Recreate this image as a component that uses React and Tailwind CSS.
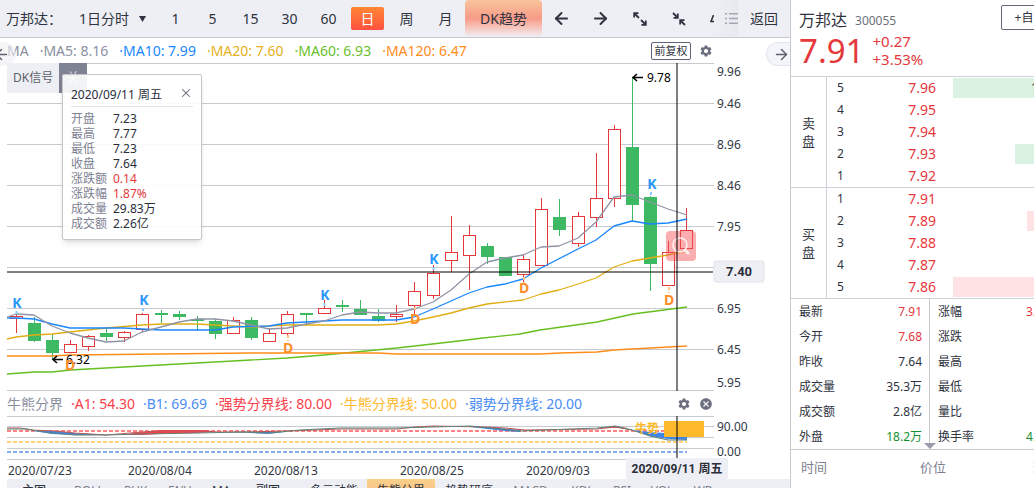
import { useState } from 'react';
import { ArrowLeft, ArrowRight, X } from 'lucide-react';
import { MdSettings, MdCancel } from 'react-icons/md';

const RED = '#e5383b';
const GREEN = '#3cb962';

const PERIODS = ['1', '5', '15', '30', '60', '日', '周', '月'];

const AVERAGES = [
  { name: 'MA5', value: '8.16', color: 'text-[#8b90a0]' },
  { name: 'MA10', value: '7.99', color: 'text-[#1a87ff]' },
  { name: 'MA20', value: '7.60', color: 'text-[#e5b01a]' },
  { name: 'MA60', value: '6.93', color: 'text-[#6abf2a]' },
  { name: 'MA120', value: '6.47', color: 'text-[#ff8c1a]' },
];

const BOUNDARIES = [
  { name: 'A1', value: '54.30', color: 'text-[#f9404a]' },
  { name: 'B1', value: '69.69', color: 'text-[#4a8df5]' },
  { name: '强势分界线', value: '80.00', color: 'text-[#f9404a]' },
  { name: '牛熊分界线', value: '50.00', color: 'text-[#ffb92e]' },
  { name: '弱势分界线', value: '20.00', color: 'text-[#4a8df5]' },
];

// x, body top, body bottom, wick top, wick bottom, rising
const CANDLES = [
  [16, 316, 318, 314, 333, 1], [34, 323, 341, 317, 342, 0], [52, 340, 353, 334, 359, 0],
  [70, 344, 352, 340, 352, 1], [88, 336, 346, 335, 351, 1], [106, 333, 337, 329, 341, 0],
  [124, 332, 337, 331, 342, 1], [142, 314, 329, 313, 331, 1], [161, 313, 315, 310, 323, 0],
  [179, 314, 317, 311, 320, 0], [197, 319, 321, 316, 331, 0], [215, 321, 334, 319, 339, 0],
  [233, 320, 333, 317, 333, 1], [251, 320, 338, 317, 340, 0], [269, 333, 341, 328, 342, 1],
  [287, 314, 333, 311, 336, 1], [306, 313, 315, 313, 325, 0], [324, 308, 313, 300, 313, 1],
  [342, 305, 307, 300, 312, 0], [360, 309, 315, 300, 315, 0], [378, 316, 321, 309, 322, 0],
  [396, 314, 316, 305, 322, 1], [414, 291, 305, 282, 314, 1], [433, 273, 295, 265, 299, 1],
  [451, 252, 260, 216, 272, 1], [469, 235, 255, 225, 290, 1], [487, 246, 257, 243, 264, 0],
  [505, 257, 276, 257, 276, 0], [523, 259, 274, 254, 283, 1], [541, 209, 265, 198, 266, 1],
  [559, 217, 230, 199, 236, 0], [578, 216, 243, 212, 247, 1], [596, 198, 217, 153, 227, 1],
  [614, 129, 198, 125, 207, 1], [632, 147, 205, 77, 222, 0], [650, 197, 264, 196, 291, 0],
  [668, 252, 285, 241, 286, 1], [686, 230, 248, 208, 252, 1],
];

const LINES = [
  { color: '#66bf1f', points: '7,374 34,372 52,372 70,370 124,367 251,360 287,358 324,355 397,348 450,342 483,338 520,334 540,330 597,322 633,314 687,307' },
  { color: '#ff8c1a', points: '7,356 52,356 70,355 251,353 378,353 396,354 540,354 560,353 597,352 614,350 632,349 687,346' },
  { color: '#e0ae14', points: '7,339 16,337 34,335 52,334 70,332 106,328 142,325 161,324 197,324 233,326 251,327 287,325 378,325 396,324 414,321 433,317 451,313 469,308 487,304 523,300 541,294 559,290 578,284 596,278 614,267 632,261 650,258 668,255 687,251' },
  { color: '#1a87ff', points: '7,318 16,318 34,319 52,324 70,328 124,328 142,329 161,330 215,330 233,327 269,326 287,323 324,321 342,320 396,320 414,317 433,309 451,301 469,293 487,287 505,284 523,279 541,268 578,249 596,240 614,226 632,221 650,224 668,223 687,219' },
  { color: '#9094a5', points: '7,317 16,314 34,315 52,326 70,333 88,338 106,342 124,341 142,332 161,327 179,322 197,319 215,319 233,321 251,325 269,329 287,328 306,324 324,321 342,315 360,312 378,313 396,313 414,309 433,302 451,290 469,274 487,262 505,258 523,255 541,247 559,246 578,238 596,222 614,197 632,195 650,202 668,209 687,215' },
];

const SIGNALS = [
  ['K', 17, 308], ['K', 144, 305], ['K', 325, 300], ['K', 434, 264], ['K', 652, 189],
  ['D', 70, 370], ['D', 288, 353], ['D', 415, 324], ['D', 524, 293], ['D', 669, 305],
];

const GRID = [103, 144, 185, 226, 267, 308, 349, 390];

const PRICE_TICKS = [
  ['9.96', 76], ['9.46', 108], ['8.96', 149], ['8.46', 190], ['7.95', 231],
  ['6.95', 313], ['6.45', 354], ['5.95', 387],
];

const DATES = [['2020/07/23', 8], ['2020/08/04', 128], ['2020/08/13', 254], ['2020/08/25', 400], ['2020/09/03', 526]];

const DAY_INFO = [
  ['开盘', '7.23'], ['最高', '7.77'], ['最低', '7.23'], ['收盘', '7.64'],
  ['涨跌额', '0.14', true], ['涨跌幅', '1.87%', true], ['成交量', '29.83万'], ['成交额', '2.26亿'],
];

const SELL = [['5', '7.96', 0, '1024'], ['4', '7.95'], ['3', '7.94'], ['2', '7.93', 62, ''], ['1', '7.92']];
const BUY = [['1', '7.91'], ['2', '7.89', 74, ''], ['3', '7.88'], ['4', '7.87'], ['5', '7.86', 0, '']];

const STATS = [
  ['最新', '7.91', 'text-[#e5383b]', '涨幅', '3.53%', 'text-[#e5383b]'],
  ['今开', '7.68', 'text-[#e5383b]', '涨跌', '', ''],
  ['昨收', '7.64', '', '最高', '', ''],
  ['成交量', '35.3万', '', '最低', '', ''],
  ['成交额', '2.8亿', '', '量比', '', ''],
  ['外盘', '18.2万', 'text-[#159030]', '换手率', '4.68%', 'text-[#159030]'],
];

const ScaleIcon = ({ inward }) => (
  <svg width="14" height="14" viewBox="0 0 14 14" fill="none" stroke="currentColor" strokeWidth="1.8">
    {inward ? (
      <path d="M1 1l4.500 4.500M5.800 1.500v4.300H1.500M13 13L8.500 8.500M8.200 12.500V8.200h4.300" />
    ) : (
      <path d="M1.500 1.500L6 6M1.200 5.500V1.200h4.300M12.500 12.500L8 8M12.800 8.500v4.300H8.500" />
    )}
  </svg>
);

const ListIcon = () => (
  <svg width="13" height="13" viewBox="0 0 13 13" fill="none" stroke="#a5a8b3" strokeWidth="1.4">
    <path d="M0 1.700h2M4 1.700h9M0 6.500h2M4 6.500h9M0 11.300h2M4 11.300h9" />
  </svg>
);

function Toolbar({ period, onPeriod }) {
  return (
    <header className="flex h-[38px] shrink-0 items-center border-b border-[#c9cad0] bg-[#eeeff4] pl-1.5 text-sm text-[#2f3340]">
      <span className="w-[73px] shrink-0">万邦达：</span>
      <button className="flex w-[78px] shrink-0 items-center gap-2.5 whitespace-nowrap">
        1日分时
        <svg width="7" height="6" viewBox="0 0 7 6" fill="currentColor"><path d="M0 0h7L3.500 6z" /></svg>
      </button>
      {PERIODS.map((p) => (
        <button
          key={p}
          onClick={() => onPeriod(p)}
          className={`flex shrink-0 justify-center ${p === '1' || p === '5' ? 'w-[37px]' : 'w-[39px]'}`}
        >
          <span className={p === period ? 'w-[33px] rounded-xs bg-linear-to-b from-[#ff8433] to-[#ff5040] leading-[23px] text-white' : 'leading-[23px]'}>
            {p}
          </span>
        </button>
      ))}
      <button className="h-full w-[77px] shrink-0 self-start rounded-sm bg-linear-to-b from-[#f8c49c] via-[#f79b88] to-[#eeeff4]">
        DK趋势
      </button>
      <button aria-label="左移" className="flex w-[39px] shrink-0 justify-center"><ArrowLeft size={19} strokeWidth={2.5} /></button>
      <button aria-label="右移" className="flex w-[39px] shrink-0 justify-center"><ArrowRight size={19} strokeWidth={2.5} /></button>
      <button aria-label="放大" className="flex w-[39px] shrink-0 justify-center"><ScaleIcon /></button>
      <button aria-label="缩小" className="flex w-[39px] shrink-0 justify-center"><ScaleIcon inward /></button>
      <button aria-label="画线" className="flex min-w-0 flex-1 justify-end overflow-hidden">
        <svg width="4" height="8" viewBox="0 0 4 8" fill="none" stroke="currentColor" strokeWidth="1.6"><path d="M3.500 0L1 6.500h3" /></svg>
      </button>
      <button aria-label="列表" className="flex h-full w-6 shrink-0 items-center justify-end bg-linear-to-l from-[#e8e9ee] to-[#eeeff4]"><ListIcon /></button>
      <button className="w-[52px] shrink-0">返回</button>
    </header>
  );
}

function Legend({ title, items, gap, children }) {
  return (
    <div className={`flex h-[25px] shrink-0 items-center pl-[7px] text-sm whitespace-nowrap ${gap}`}>
      <span className="text-[#8b90a0]">{title}</span>
      {items.map((it) => (
        <span key={it.name} className={it.color}>·{it.name}: {it.value}</span>
      ))}
      <div className="mr-[77px] ml-auto flex items-center gap-2 text-[#6b6e7e]">{children}</div>
    </div>
  );
}

function Candle({ x, top, bottom, high, low, up }) {
  if (!up) {
    return (
      <g fill={GREEN}>
        <rect x={x} y={high} width="1" height={low - high} />
        <rect x={x - 6} y={top} width="13" height={bottom - top} />
      </g>
    );
  }
  return (
    <g>
      <rect x={x} y={high} width="1" height={top - high} fill={RED} />
      <rect x={x} y={bottom} width="1" height={Math.max(low - bottom, 0)} fill={RED} />
      <rect x={x - 5.5} y={top + 0.5} width="12" height={Math.max(bottom - top, 1)} fill="#fff" stroke={RED} />
    </g>
  );
}

function PriceChart() {
  return (
    <svg viewBox="0 63 790 328" className="block h-auto w-full" role="img" aria-label="日K线">
      <g stroke="#c9cad0" shapeRendering="crispEdges">
        <path d="M7 63.500H714" />
        {GRID.map((y) => <path key={y} d={`M7 ${y + 0.5}H714`} />)}
      </g>
      <g shapeRendering="crispEdges">
        {CANDLES.map(([x, top, bottom, high, low, up]) => (
          <Candle key={x} x={x} top={top} bottom={bottom} high={high} low={low} up={up} />
        ))}
      </g>
      {LINES.map((l) => (
        <polyline key={l.color} points={l.points} fill="none" stroke={l.color} strokeWidth="1.3" strokeLinejoin="round" />
      ))}
      <g strokeDasharray="3 2" strokeWidth="2">
        <path d="M16.500 311v4M143 308v5M324.500 303v5M433.500 267v5M651 192v4" stroke="#8fc8ff" />
        <path d="M70.500 353v6M288 335v6M415 307v5M524 277v6M669 287v6" stroke="#ffc38a" />
      </g>
      <g stroke="#000" strokeWidth="1.6" fill="none">
        <path d="M643 77.500H633M637 74l-4 3.500 4 3.500" />
        <path d="M63 359.500H53M57 356l-4 3.500 4 3.500" />
      </g>
      <g className="text-xs" fill="#000">
        <text x="647" y="82">9.78</text>
        <text x="66" y="364">6.32</text>
      </g>
      <g className="text-sm font-bold" textAnchor="middle">
        {SIGNALS.map(([t, x, y]) => (
          <text key={x} x={x} y={y} fill={t === 'K' ? '#2b98fb' : '#ff8e2b'}>{t}</text>
        ))}
      </g>
      <rect x="666" y="231" width="30" height="30" rx="4" fill="#f5555a" fillOpacity="0.48" />
      <g fill="none" stroke="#fff" strokeOpacity="0.85">
        <circle cx="680" cy="245" r="7" strokeWidth="1.6" />
        <path d="M685 250l3 3" strokeWidth="3" strokeLinecap="round" />
      </g>
      <g fill="#000" fillOpacity="0.5">
        <rect x="676" y="63" width="2" height="328" />
        <rect x="7" y="271" width="706" height="2" />
      </g>
      <g className="text-xs" fill="#343846">
        {PRICE_TICKS.map(([t, y]) => <text key={t} x="717" y={y}>{t}</text>)}
      </g>
      <rect x="714" y="261" width="50" height="21" rx="2" fill="#eeeff4" stroke="#e3e4ec" />
      <text x="739" y="276" textAnchor="middle" fill="#2a2e3b" className="font-['Roboto'] text-[13px] font-bold">7.40</text>
    </svg>
  );
}

function BoundaryChart() {
  return (
    <svg viewBox="0 416 790 63" className="block h-auto w-full shrink-0" role="img" aria-label="牛熊分界">
      <g stroke="#c9cad0" shapeRendering="crispEdges">
        {[416, 426, 437, 448, 459].map((y) => <path key={y} d={`M7 ${y + 0.5}H714`} />)}
      </g>
      <g strokeDasharray="4 2" strokeWidth="2" shapeRendering="crispEdges">
        <path d="M7 431H687" stroke="#ff8080" />
        <path d="M7 442H687" stroke="#ffd27a" />
        <path d="M7 452H687" stroke="#86aef0" />
      </g>
      <path d="M33 431L55 431 75 433 106 435 75 435 52 434z" fill="#3f86e8" />
      <path d="M120 435L142 432 160 430 205 430 217 432 197 433 160 434 142 435z" fill="#f9404a" />
      <path d="M245 432L265 432 285 432 268 434 250 433z" fill="#3f86e8" />
      <path d="M470 427L490 427 520 430 520 432 505 431z" fill="#3f86e8" />
      <path d="M600 428L615 426 628 428z" fill="#f9404a" />
      <path d="M632 430L650 432 665 433 687 436 687 440 668 439 650 436z" fill="#3f86e8" />
      <g fill="none" strokeWidth="1.2">
        <polyline stroke="#b85b57" points="7,428 20,428 33,430 55,431 75,433 106,435 142,432 160,431 205,431 217,432 245,432 287,431 340,429 397,429 414,427 433,426 487,427 505,428 525,430 597,429 615,427 632,430" />
        <polyline stroke="#5f8279" points="7,429 25,429 52,433 75,435 106,435 142,434 197,433 245,432 270,433 300,430 340,428 397,428 433,427 470,426 490,428 520,431 597,428 615,426 632,430 650,436 668,440 687,440" />
      </g>
      <text x="635" y="433" fill="#ffba2b" className="text-xs font-bold">牛势</text>
      <rect x="664" y="421" width="40" height="16" fill="#ffba2b" />
      <rect x="676" y="416" width="2" height="43" fill="#000" fillOpacity="0.5" />
      <g className="text-xs" fill="#343846">
        <text x="717" y="431">90.00</text>
        <text x="717" y="456">0.00</text>
        {DATES.map(([t, x]) => <text key={t} x={x} y="475">{t}</text>)}
      </g>
      <rect x="626" y="458" width="102" height="21" rx="2" fill="#eeeff4" />
      <text x="677" y="473" textAnchor="middle" fill="#2a2e3b" className="font-['Roboto','Noto_Sans_CJK_SC',sans-serif] text-xs font-bold">2020/09/11 周五</text>
    </svg>
  );
}

function DayCard({ onClose }) {
  return (
    <div className="absolute top-[11px] left-[62px] w-[140px] rounded-xs border border-[#c6c7cc] bg-white/90 px-2 pt-2 pb-2 text-xs text-[#2a2e3b] shadow-md">
      <div className="flex h-6 items-center justify-between border-b border-[#e3e4ea] whitespace-nowrap">
        <span>2020/09/11 周五</span>
        <button aria-label="关闭" onClick={onClose} className="pb-1 text-[#62656f]"><X size={14} strokeWidth={1.8} /></button>
      </div>
      <dl className="grid grid-cols-[42px_1fr] pt-1 leading-[15px]">
        {DAY_INFO.map(([k, v, red]) => (
          <div key={k} className="contents">
            <dt className="text-[#7d7f92]">{k}</dt>
            <dd className={red ? 'text-[#e5383b]' : ''}>{v}</dd>
          </div>
        ))}
      </dl>
    </div>
  );
}

const TAB = 'shrink-0 text-[#7d7f8d]';
const TAB_DARK = 'shrink-0 text-[#2f3340]';

function IndicatorTabs() {
  return (
    <nav className="ml-[7px] flex h-6 shrink-0 items-center bg-[#eeeff4] pl-[15px] text-xs whitespace-nowrap">
      <b className="w-[52px] shrink-0 font-medium text-[#2f3340]">主图</b>
      <button className={`${TAB} w-[50px] text-left`}>BOLL</button>
      <button className={`${TAB} w-[44px] text-left`}>PUK</button>
      <button className={`${TAB} w-[44px] text-left`}>ENV</button>
      <button className={`${TAB_DARK} w-[44px] text-left`}>MA</button>
      <b className="w-[54px] shrink-0 font-medium text-[#2f3340]">副图</b>
      <button className={`${TAB_DARK} w-[57px] text-left`}>多元动能</button>
      <button className="h-full w-[68px] shrink-0 bg-linear-to-b from-[#fad189] to-[#f7b58c] text-[#2f3340]">牛熊分界</button>
      <button className={`${TAB_DARK} w-[68px]`}>趋势研底</button>
      <button className={`${TAB} w-[55px]`}>MACD</button>
      <button className={`${TAB} w-[46px]`}>KDJ</button>
      <button className={`${TAB} w-[36px]`}>RSI</button>
      <button className={`${TAB} w-[44px]`}>VOL</button>
      <button className={`${TAB} w-[38px]`}>WR</button>
    </nav>
  );
}

function OrderBook({ label, rows, bar }) {
  return (
    <table aria-label={label} className="w-full table-fixed border-separate border-spacing-0 border-b border-[#d0d1d8]">
      <colgroup>
        <col className="w-9" />
        <col className="w-[27px]" />
        <col className="w-[99px]" />
        <col />
      </colgroup>
      <tbody>
        {rows.map(([level, price, inset, volume], i) => (
          <tr key={level} className="h-[22px]">
            {i === 0 && (
              <th rowSpan={5} scope="rowgroup" className="border-r border-[#d0d1d8] px-[11px] text-[13px] leading-[18px] font-normal text-[#343846]">
                {label}
              </th>
            )}
            <td className="p-0 pl-2.5 text-xs text-[#2f3340]">{level}</td>
            <td className="p-0 pr-[17px] text-right text-sm leading-5 text-[#e5383b]">{price}</td>
            <td className="p-0">
              {inset !== undefined && (
                <div className={`h-5 pl-[78px] text-xs leading-5 ${bar}`} style={{ marginLeft: inset }}>{volume}</div>
              )}
            </td>
          </tr>
        ))}
      </tbody>
    </table>
  );
}

function QuotePanel() {
  return (
    <aside className="w-[244px] shrink-0 overflow-hidden border-l border-[#c9cad0] text-[#2f3340]">
      <div className="w-[300px]">
        <div className="flex h-[77px] justify-between border-b border-[#d0d1d8] pl-2">
          <div>
            <div className="flex h-8 items-end gap-2">
              <h1 className="text-base leading-6">万邦达</h1>
              <span className="text-xs leading-[22px] text-[#6d707b]">300055</span>
            </div>
            <div className="flex gap-2 text-[#e5383b]">
              <strong className="text-[33px] leading-[38px] font-normal">7.91</strong>
              <div className="text-[15px] leading-[18px]">
                <div>+0.27</div>
                <div>+3.53%</div>
              </div>
            </div>
          </div>
          <button className="mt-[5px] mr-8 h-[25px] w-[58px] rounded-xs border border-[#62657a] text-xs">+自选</button>
        </div>
        <OrderBook label="卖盘" rows={SELL} bar="bg-[#daf2e2]" />
        <OrderBook label="买盘" rows={BUY} bar="bg-[#ffe2e3]" />
        <div className="relative flex border-b border-[#c9cad0] text-xs">
          <dl className="w-[139px] shrink-0 border-r border-[#c9cad0] pr-[7px] pl-2">
            {STATS.map(([k, v, color]) => (
              <div key={k} className="flex h-[25px] items-center justify-between">
                <dt>{k}</dt>
                <dd className={color}>{v}</dd>
              </div>
            ))}
          </dl>
          <dl className="flex-1 pl-2">
            {STATS.map(([, , , k, v, color]) => (
              <div key={k} className="flex h-[25px] items-center">
                <dt className="w-[88px]">{k}</dt>
                <dd className={color}>{v}</dd>
              </div>
            ))}
          </dl>
          <svg width="12" height="6" viewBox="0 0 12 6" className="absolute bottom-0 left-[133px]"><path d="M0 0h12L6 6z" fill="#9a9bab" /></svg>
        </div>
        <div className="flex h-9 items-center pl-2.5 text-[13px] text-[#7d7f8d]">
          <span className="w-[119px]">时间</span>
          <span className="w-[113px]">价位</span>
          <span>现量</span>
        </div>
      </div>
    </aside>
  );
}

export default function App() {
  const [period, setPeriod] = useState('日');
  const [signal, setSignal] = useState(false);
  const [cardOpen, setCardOpen] = useState(true);

  return (
    <div className="flex h-screen overflow-hidden bg-white font-['Noto_Sans','Noto_Sans_CJK_SC',sans-serif]">
      <main className="relative flex min-w-0 flex-1 flex-col">
        <Toolbar period={period} onPeriod={setPeriod} />
        <Legend title="MA" items={AVERAGES} gap="gap-[11px]">
          <button className="h-[18px] w-10 rounded-xs border border-[#62657a] text-[11px] leading-4 text-[#2f3340]">前复权</button>
          <button aria-label="均线设置"><MdSettings size={14} /></button>
        </Legend>

        <section className="relative shrink-0">
          <PriceChart />
          <div className="absolute top-0 left-[7px] flex h-[30px] text-xs">
            <span className="w-[52px] bg-[#eeeff4] pl-1.5 leading-[30px] text-[#5c5f6b]">DK信号</span>
            <button onClick={() => setSignal(!signal)} className="w-7 bg-[#7f8293] text-[#dcdde3]">{signal ? '开' : '关'}</button>
          </div>
          {cardOpen && <DayCard onClose={() => setCardOpen(false)} />}
        </section>

        <Legend title="牛熊分界" items={BOUNDARIES} gap="gap-2">
          <button aria-label="指标设置"><MdSettings size={14} /></button>
          <button aria-label="关闭指标"><MdCancel size={14} /></button>
        </Legend>
        <BoundaryChart />
        <IndicatorTabs />

        <button aria-label="上一只" className="absolute top-[42px] left-0 flex h-6 w-4 items-center justify-end rounded-r-full bg-[#eeeff4]/60 pr-1.5 text-[#5c5f6b]">
          <ArrowLeft size={17} className="shrink-0" />
        </button>
        <button aria-label="下一只" className="absolute top-[42px] right-0 flex h-6 w-6 items-center justify-end rounded-l-full border border-r-0 border-[#e3e5ee] bg-[#f3f5fa] text-[#5c5f6b]">
          <ArrowRight size={17} />
        </button>
      </main>
      <QuotePanel />
    </div>
  );
}
